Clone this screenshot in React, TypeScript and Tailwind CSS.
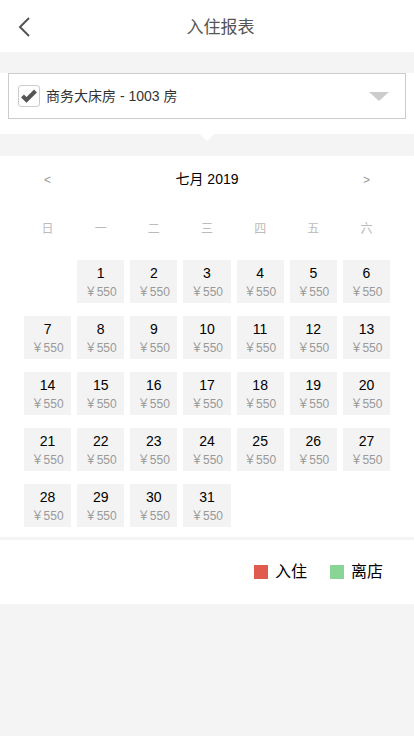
const weekdays = ["日", "一", "二", "三", "四", "五", "六"]

// July 2019 starts on Monday
const days: (number | null)[] = [null, ...Array.from({ length: 31 }, (_, i) => i + 1)]

export default function App() {
  return (
    <main
      className="min-h-screen bg-[#f4f4f4] text-[#333]"
      style={{ fontFamily: '"Liberation Sans", "Noto Sans CJK SC", sans-serif' }}
    >
      {/* Header */}
      <header className="h-[52px] bg-white relative flex items-center justify-center pt-[3px] pl-[27px]">
        <button className="absolute left-[16px] top-[16px] w-[16px] h-[22px] flex items-center justify-center">
          <svg width="14" height="22" viewBox="0 0 14 22" fill="none">
            <path d="M12 2 L3 11 L12 20" stroke="#555" strokeWidth="2" />
          </svg>
        </button>
        <h1 className="text-[17px] text-[#555]">入住报表</h1>
      </header>

      <div className="h-[21px]" />

      {/* Room select */}
      <section className="bg-white pb-[15px]">
        <div className="mx-[8px] h-[46px] border border-[#ccc] flex items-center pl-[9px] pr-[16px]">
          <span className="w-[22px] h-[22px] border border-[#ccc] rounded-[3px] flex items-center justify-center">
            <svg width="16" height="14" viewBox="0 0 16 14">
              <path d="M1.5 7 L5.5 11 L14.5 2" stroke="#555" strokeWidth="4" fill="none" />
            </svg>
          </span>
          <span className="ml-[6px] text-[14px] text-[#333] flex-1">商务大床房 - 1003 房</span>
          <span className="w-0 h-0 border-l-[10px] border-l-transparent border-r-[10px] border-r-transparent border-t-[9px] border-t-[#ccc]" />
        </div>
      </section>

      {/* Gray band with notch */}
      <div className="h-[22px] flex justify-center">
        <span className="w-0 h-0 border-l-[7px] border-l-transparent border-r-[7px] border-r-transparent border-t-[7px] border-t-white" />
      </div>

      {/* Calendar */}
      <section className="bg-white pb-[10px]">
        <div className="h-[47px] flex items-center justify-between px-[44px]">
          <span className="text-[12px] text-[#999]">&lt;</span>
          <span className="text-[14px] text-black">七月 2019</span>
          <span className="text-[12px] text-[#999]">&gt;</span>
        </div>
        <div className="h-[51px] grid grid-cols-7 gap-x-[6px] px-[24px] items-center">
          {weekdays.map((w) => (
            <span key={w} className="text-center text-[12px] text-[#bbb]">{w}</span>
          ))}
        </div>
        <div className="mt-[6px] grid grid-cols-7 gap-x-[6px] gap-y-[13px] px-[24px]">
          {days.map((d, i) =>
            d === null ? (
              <div key={i} />
            ) : (
              <div key={i} className="h-[43px] bg-[#f3f3f3] flex flex-col items-center justify-center">
                <span className="text-[14px] leading-[18px] text-black">{d}</span>
                <span className="text-[12px] leading-[16px] text-[#999] mt-[2px]">￥550</span>
              </div>
            )
          )}
        </div>
      </section>

      <div className="h-[3px]" />

      {/* Legend */}
      <section className="bg-white h-[64px] flex items-center justify-end pr-[31px] gap-[23px]">
        <div className="flex items-center gap-[7px]">
          <span className="w-[14px] h-[14px] bg-[#e05a4d]" />
          <span className="text-[16px] text-black">入住</span>
        </div>
        <div className="flex items-center gap-[7px]">
          <span className="w-[14px] h-[14px] bg-[#88d595]" />
          <span className="text-[16px] text-black">离店</span>
        </div>
      </section>
    </main>
  )
}
